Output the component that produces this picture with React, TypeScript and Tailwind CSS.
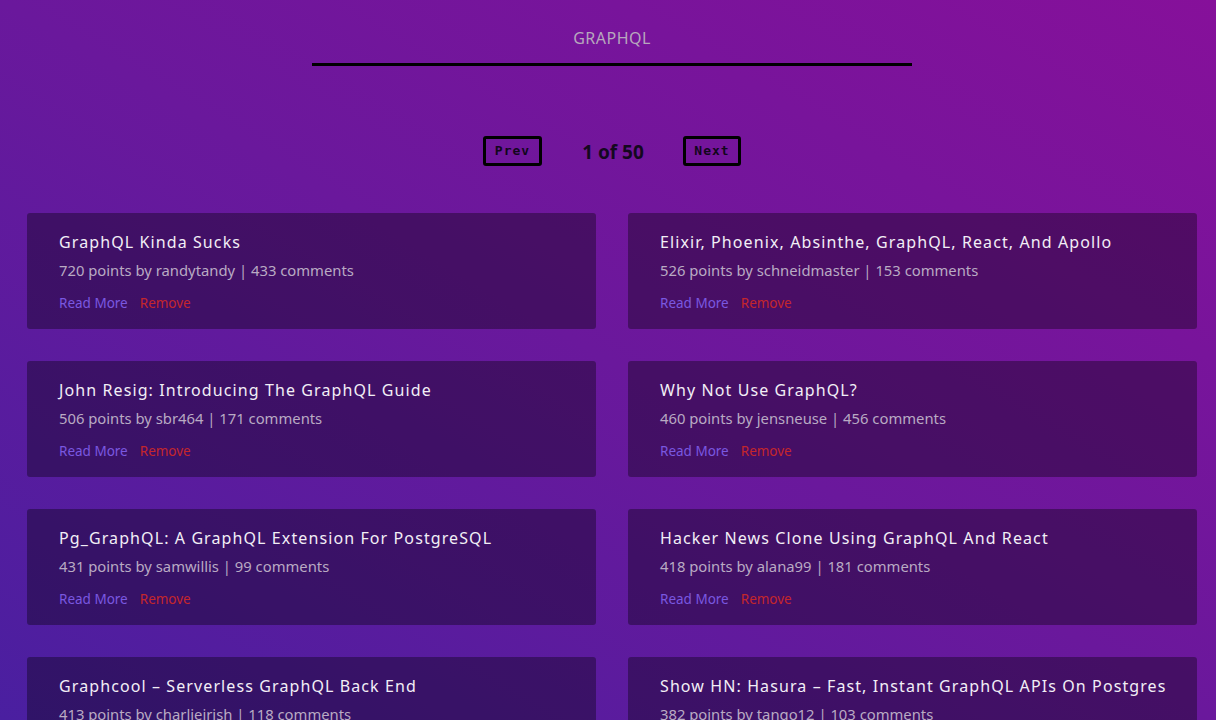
import React from "react";

const items = [
  ["GraphQL Kinda Sucks", 720, "randytandy", 433],
  ["Elixir, Phoenix, Absinthe, GraphQL, React, And Apollo", 526, "schneidmaster", 153],
  ["John Resig: Introducing The GraphQL Guide", 506, "sbr464", 171],
  ["Why Not Use GraphQL?", 460, "jensneuse", 456],
  ["Pg_GraphQL: A GraphQL Extension For PostgreSQL", 431, "samwillis", 99],
  ["Hacker News Clone Using GraphQL And React", 418, "alana99", 181],
  ["Graphcool – Serverless GraphQL Back End", 413, "charlieirish", 118],
  ["Show HN: Hasura – Fast, Instant GraphQL APIs On Postgres", 382, "tango12", 103],
] as const;

export default function App() {
  return (
    <div
      className="w-full h-[720px] overflow-hidden bg-[linear-gradient(to_top_right,#4a1fa0,#6a189c_50%,#86109a)]"
      style={{ fontFamily: '"Noto Sans", sans-serif' }}
    >
      <div className="w-[1170px] ml-[27px]">
        <div className="flex justify-center pt-[26px]">
          <div className="w-[600px] border-b-[3px] border-black h-[40px] flex items-start justify-center">
            <span className="text-[16px] leading-[24px] text-[#b7a7bd] tracking-[0.5px]">GRAPHQL</span>
          </div>
        </div>
        <div className="flex justify-center items-start mt-[70px] gap-[40px]">
          <button
            className="w-[59px] h-[30px] border-[3px] border-black rounded-[3px] text-[13px] font-bold text-[#12061c] tracking-[1px]"
            style={{ fontFamily: '"DejaVu Sans Mono", monospace' }}
          >
            Prev
          </button>
          <span className="text-[19px] leading-[30px] font-bold text-[#14081f] w-[62px] text-center pt-[1px]">1 of 50</span>
          <button
            className="w-[58px] h-[30px] border-[3px] border-black rounded-[3px] text-[13px] font-bold text-[#12061c] tracking-[1px] -ml-[1px]"
            style={{ fontFamily: '"DejaVu Sans Mono", monospace' }}
          >
            Next
          </button>
        </div>
        <div className="grid grid-cols-2 gap-x-[32px] gap-y-[32px] mt-[46px]">
          {items.map(([t, p, u, c]) => (
            <div key={t} className="h-[116px] bg-black/35 rounded-[3px] px-[32px] pt-[17px]">
              <div className="text-[16px] leading-[24px] text-[#f2eef6] tracking-[1.1px] whitespace-nowrap">{t}</div>
              <div className="text-[14.8px] leading-[22px] mt-[5px] text-[#b9aac3] whitespace-nowrap">
                {p} points by {u} | {c} comments
              </div>
              <div className="flex gap-[12px] mt-[12px] text-[13.5px] leading-[20px]">
                <span className="text-[#7a58e0]">Read More</span>
                <span className="text-[#c4262c]">Remove</span>
              </div>
            </div>
          ))}
        </div>
      </div>
    </div>
  );
}
